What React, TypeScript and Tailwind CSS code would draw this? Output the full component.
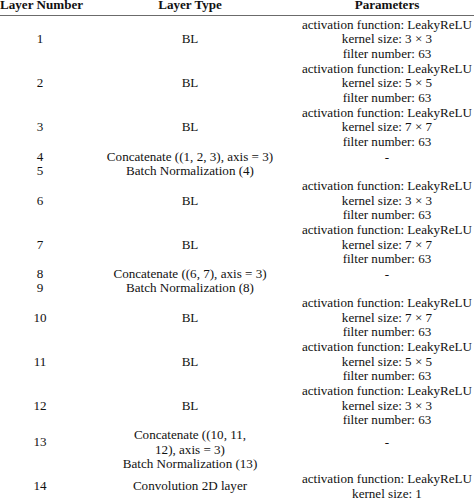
import React from 'react';

type Row = {
    num: string;
    type: React.ReactNode;
    params: string[];
};

const bl = (k: string): string[] => [
    'activation function: LeakyReLU',
    `kernel size: ${k} × ${k}`,
    'filter number: 63',
];

const rows: Row[] = [
    { num: '1', type: 'BL', params: bl('3') },
    { num: '2', type: 'BL', params: bl('5') },
    { num: '3', type: 'BL', params: bl('7') },
    { num: '4', type: 'Concatenate ((1, 2, 3), axis = 3)', params: ['-'] },
    { num: '5', type: 'Batch Normalization (4)', params: [] },
    { num: '6', type: 'BL', params: bl('3') },
    { num: '7', type: 'BL', params: bl('7') },
    { num: '8', type: 'Concatenate ((6, 7), axis = 3)', params: ['-'] },
    { num: '9', type: 'Batch Normalization (8)', params: [] },
    { num: '10', type: 'BL', params: bl('7') },
    { num: '11', type: 'BL', params: bl('5') },
    { num: '12', type: 'BL', params: bl('3') },
    {
        num: '13',
        type: (
            <>
                Concatenate ((10, 11,
                <br />
                12), axis = 3)
            </>
        ),
        params: ['-'],
    },
    { num: '', type: 'Batch Normalization (13)', params: [] },
    {
        num: '14',
        type: 'Convolution 2D layer',
        params: ['activation function: LeakyReLU', 'kernel size: 1'],
    },
];

export default function App() {
    return (
        <div
            className="h-[501px] w-[474px] overflow-hidden bg-white text-[13.1px] leading-[14.65px] text-[#111]"
            style={{ fontFamily: '"Liberation Serif", "Times New Roman", serif' }}
        >
            <table className="-mt-[2px] w-[474px] table-fixed border-collapse">
                <colgroup>
                    <col className="w-[80px]" />
                    <col className="w-[220px]" />
                    <col className="w-[174px]" />
                </colgroup>
                <thead>
                    <tr className="border-b border-[#6b6b6b]">
                        <th className="whitespace-nowrap pb-[2.5px] text-center font-bold">Layer Number</th>
                        <th className="whitespace-nowrap pb-[2.5px] text-center font-bold">Layer Type</th>
                        <th className="whitespace-nowrap pb-[2.5px] text-center font-bold">Parameters</th>
                    </tr>
                </thead>
                <tbody>
                    <tr className="h-[2px]">
                        <td colSpan={3} />
                    </tr>
                    {rows.map((r, i) => (
                        <tr key={i}>
                            <td className="p-0 text-center align-middle">{r.num}</td>
                            <td className="whitespace-nowrap p-0 text-center align-middle">{r.type}</td>
                            <td className="whitespace-nowrap p-0 text-center align-middle">
                                {r.params.length === 0 ? <span>&nbsp;</span> : null}
                                {r.params.map((p, j) => (
                                    <div key={j}>{p}</div>
                                ))}
                            </td>
                        </tr>
                    ))}
                </tbody>
            </table>
        </div>
    );
}
